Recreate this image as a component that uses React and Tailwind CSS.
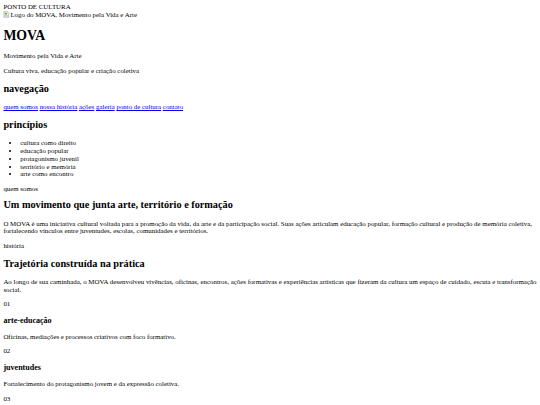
export default function App() {
  const link = "text-[#0000ee] underline";
  const p = "my-[6.75px]";
  const h2 = "text-[10.25px] leading-[11.64px] font-bold my-[8.404px]";
  const h3 = "text-[8.05px] leading-[9.07px] font-bold my-[7.898px]";
  return (
    <div className="bg-white text-black font-['Liberation_Serif','Times_New_Roman',serif] text-[6.88px] leading-[7.763px] p-[3.375px] min-h-[405px]">
      <header>
        <div>PONTO DE CULTURA</div>
        <div className="h-[7.763px]">
          <svg width="6.75" height="6.75" viewBox="0 0 16 16" className="inline-block align-[-1px] mr-[0.3px]">
            <path d="M2 1h9l3 3v5l-3 2-3-2-3 2-3-2z" fill="#f4f4f4" stroke="#8a8a8a" strokeWidth="1" />
            <rect x="4" y="4" width="6" height="4" fill="#6ab04c" />
            <path d="M2 11l3 2 3-2 3 2 3-2v4H2z" fill="#f4f4f4" stroke="#8a8a8a" strokeWidth="1" />
          </svg>
          <span>Logo do MOVA, Movimento pela Vida e Arte</span>
        </div>
        <h1 className="text-[13.76px] leading-[15.525px] font-bold my-[9.045px]">MOVA</h1>
        <p className={p}>Movimento pela Vida e Arte</p>
        <p className={p}>Cultura viva, educação popular e criação coletiva</p>
      </header>
      <nav>
        <h2 className={h2}>navegação</h2>
        <div>
          <a className={link} href="#">quem somos</a>{" "}
          <a className={link} href="#">nossa história</a>{" "}
          <a className={link} href="#">ações</a>{" "}
          <a className={link} href="#">galeria</a>{" "}
          <a className={link} href="#">ponto de cultura</a>{" "}
          <a className={link} href="#">contato</a>
        </div>
      </nav>
      <section>
        <h2 className={h2}>princípios</h2>
        <ul className="list-disc pl-[16.875px] mt-[6.75px] mb-[6px]">
          <li>cultura como direito</li>
          <li>educação popular</li>
          <li>protagonismo juvenil</li>
          <li>território e memória</li>
          <li>arte como encontro</li>
        </ul>
      </section>
      <section>
        <p className={p}>quem somos</p>
        <h2 className="text-[10.25px] leading-[11.64px] font-bold mt-[6.4px] mb-[8.404px]">Um movimento que junta arte, território e formação</h2>
        <p className={p}>
          O MOVA é uma iniciativa cultural voltada para a promoção da vida, da arte e da participação social. Suas ações articulam educação popular, formação cultural e produção de memória coletiva, fortalecendo vínculos entre juventudes, escolas, comunidades e territórios.
        </p>
      </section>
      <section>
        <p className={p}>história</p>
        <h2 className={h2}>Trajetória construída na prática</h2>
        <p className={p}>
          Ao longo de sua caminhada, o MOVA desenvolveu vivências, oficinas, encontros, ações formativas e experiências artísticas que fizeram da cultura um espaço de cuidado, escuta e transformação social.
        </p>
        <div>
          <p className={p}>01</p>
          <h3 className={h3}>arte-educação</h3>
          <p className={p}>Oficinas, mediações e processos criativos com foco formativo.</p>
        </div>
        <div>
          <p className={p}>02</p>
          <h3 className={h3}>juventudes</h3>
          <p className={p}>Fortalecimento do protagonismo jovem e da expressão coletiva.</p>
        </div>
        <div>
          <p className={p}>03</p>
        </div>
      </section>
    </div>
  );
}
